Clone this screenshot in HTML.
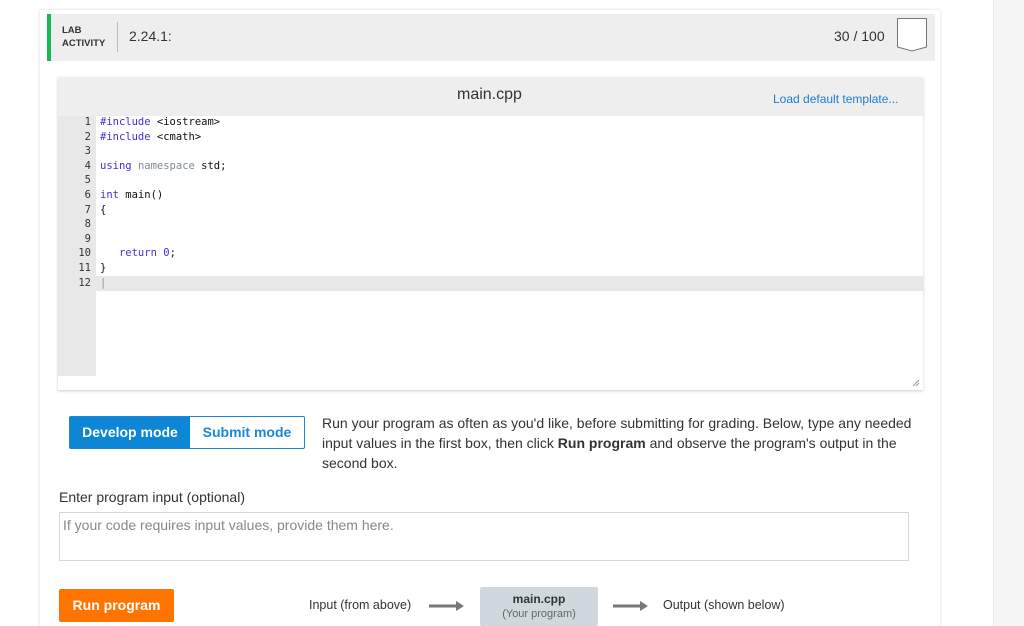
<!DOCTYPE html>
<html><head><style>
*{box-sizing:border-box;margin:0;padding:0}
body{width:1024px;height:626px;overflow:hidden;background:#fff;font-family:"Liberation Sans",sans-serif;position:relative}
.abs{position:absolute}
.code{font-family:"DejaVu Sans Mono","Liberation Mono",monospace;font-size:10.5px;line-height:14.6px}
.kw{color:#4b2bd8}.ns{color:#7f8a99}
</style></head><body>
<div class="abs" style="left:993px;top:0;width:31px;height:626px;background:#f5f5f5;border-left:1px solid #e6e6e6"></div>
<div class="abs" style="left:40px;top:10px;width:900px;height:616px;background:#fff;box-shadow:0 0 3px rgba(0,0,0,.15)"></div>
<div class="abs" style="left:47px;top:14px;width:888px;height:47px;background:#eeeeee;border-left:4px solid #1bb753"></div>
<div class="abs" style="left:62px;top:24px;font-size:9.5px;font-weight:bold;color:#333;line-height:13px">LAB<br>ACTIVITY</div>
<div class="abs" style="left:117px;top:22px;width:1px;height:30px;background:#bbb"></div>
<div class="abs" style="left:129px;top:28px;font-size:14px;color:#333">2.24.1:</div>
<div class="abs" style="left:834px;top:28px;font-size:14px;color:#333">30 / 100</div>
<svg class="abs" style="left:896px;top:17px" width="32" height="36"><path d="M1.5 1.5H30.5V30L16 34L1.5 30Z" fill="#fff" stroke="#777" stroke-width="1"/></svg>

<div class="abs" style="left:58px;top:77px;width:865px;height:313px;background:#fff;box-shadow:0 1px 3px rgba(0,0,0,.2)"></div>
<div class="abs" style="left:58px;top:77px;width:865px;height:39px;background:#eeeeee"></div>
<div class="abs" style="left:457px;top:86px;font-size:16px;color:#333">main.cpp</div>
<div class="abs" style="left:773px;top:92px;font-size:12px;color:#1a7fd4">Load default template...</div>
<div class="abs" style="left:58px;top:116px;width:38px;height:260px;background:#e8e8e8"></div>
<div class="abs" style="left:58px;top:276px;width:865px;height:15px;background:#e8e8e8"></div>
<div class="abs code" style="left:58px;top:115px;width:33px;text-align:right;color:#333">1<br>2<br>3<br>4<br>5<br>6<br>7<br>8<br>9<br>10<br>11<br>12</div>
<div class="abs code" style="left:100px;top:115px;color:#111;white-space:pre"><span class="kw">#include</span> &lt;iostream&gt;
<span class="kw">#include</span> &lt;cmath&gt;

<span class="kw">using</span> <span class="ns">namespace</span> std;

<span class="kw">int</span> main()
{


   <span class="kw">return</span> <span class="kw">0</span>;
}
<span style="color:#999">|</span></div>
<svg class="abs" style="left:912px;top:379px" width="8" height="8"><path d="M1 7L7 1M4 7L7 4" stroke="#999"/></svg>

<div class="abs" style="left:69px;top:416px;width:236px;height:33px;border:1px solid #1a87d9;border-radius:2px;display:flex;font-size:14px;font-weight:bold">
<div style="width:120px;background:#0d86d6;color:#fff;line-height:31px;text-align:center">Develop mode</div>
<div style="flex:1;color:#1a87d9;line-height:31px;text-align:center">Submit mode</div></div>
<div class="abs" style="left:322px;top:413px;width:610px;font-size:14px;line-height:20px;color:#333">Run your program as often as you'd like, before submitting for grading. Below, type any needed input values in the first box, then click <b>Run program</b> and observe the program's output in the second box.</div>
<div class="abs" style="left:59px;top:489px;font-size:14px;color:#333">Enter program input (optional)</div>
<div class="abs" style="left:59px;top:512px;width:850px;height:49px;border:1px solid #cdd8e0"></div>
<div class="abs" style="left:63px;top:517px;font-size:14px;color:#888">If your code requires input values, provide them here.</div>
<div class="abs" style="left:59px;top:589px;width:115px;height:33px;background:#ff7400;border-radius:2px;color:#fff;font-weight:bold;font-size:14px;line-height:33px;text-align:center">Run program</div>
<div class="abs" style="left:309px;top:598px;font-size:12.5px;color:#333">Input (from above)</div>
<svg class="abs" style="left:429px;top:600px" width="36" height="12"><path d="M0 6H28" stroke="#777" stroke-width="3"/><path d="M27 1L35 6L27 11Z" fill="#777"/></svg>
<div class="abs" style="left:480px;top:587px;width:118px;height:39px;background:#cfd8dc;border-radius:2px;text-align:center">
<div style="font-size:12px;font-weight:bold;color:#333;margin-top:5px">main.cpp</div>
<div style="font-size:11px;color:#666;margin-top:2px">(Your program)</div></div>
<svg class="abs" style="left:613px;top:600px" width="36" height="12"><path d="M0 6H28" stroke="#777" stroke-width="3"/><path d="M27 1L35 6L27 11Z" fill="#777"/></svg>
<div class="abs" style="left:663px;top:598px;font-size:12.5px;color:#333">Output (shown below)</div>
</body></html>
